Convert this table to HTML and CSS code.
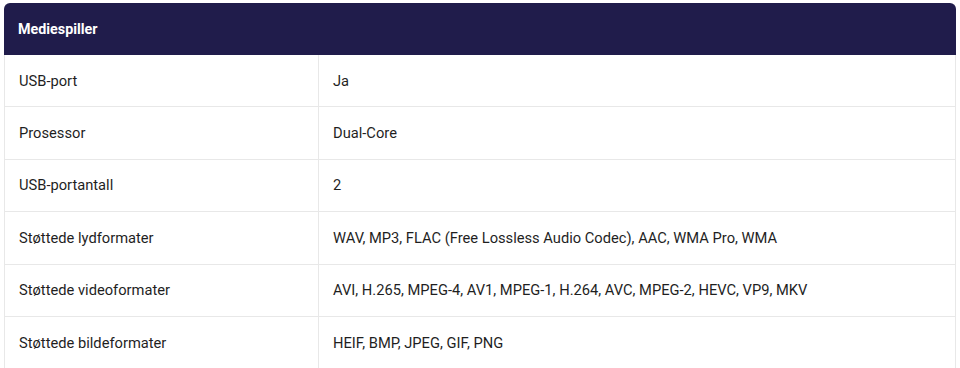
FILE: index.html
```html
<!DOCTYPE html>
<html lang="no">
<head>
<meta charset="utf-8">
<link rel="stylesheet" href="styles.css">
</head>
<body>
<div class="wrap">
  <table class="spec">
    <colgroup>
      <col class="col-k">
      <col class="col-v">
    </colgroup>
    <thead>
      <tr><th colspan="2">Mediespiller</th></tr>
    </thead>
    <tbody>
      <tr><td class="k">USB-port</td><td>Ja</td></tr>
      <tr><td class="k">Prosessor</td><td>Dual-Core</td></tr>
      <tr><td class="k">USB-portantall</td><td>2</td></tr>
      <tr><td class="k">Støttede lydformater</td><td>WAV, MP3, FLAC (Free Lossless Audio Codec), AAC, WMA Pro, WMA</td></tr>
      <tr><td class="k">Støttede videoformater</td><td>AVI, H.265, MPEG-4, AV1, MPEG-1, H.264, AVC, MPEG-2, HEVC, VP9, MKV</td></tr>
      <tr><td class="k">Støttede bildeformater</td><td>HEIF, BMP, JPEG, GIF, PNG</td></tr>
    </tbody>
  </table>
</div>
</body>
</html>
```

FILE: styles.css
```css
html, body {
  margin: 0;
  padding: 0;
  background: #ffffff;
}
body {
  font-family: Roboto, "Liberation Sans", Arial, sans-serif;
  color: #1f1f1f;
  font-size: 14.7px;
}
.wrap {
  padding: 3px 4px 0 4px;
}
.spec {
  width: 100%;
  border-collapse: separate;
  border-spacing: 0;
  table-layout: fixed;
}
.col-k {
  width: 315px;
}
.spec th {
  background: #201c4b;
  color: #ffffff;
  font-weight: 700;
  text-align: left;
  height: 52px;
  padding: 0 14px;
  box-sizing: border-box;
  border-radius: 6px 6px 0 0;
  font-size: 14.3px;
}
.spec td {
  height: 52.4px;
  box-sizing: border-box;
  padding: 0 14px;
  border-bottom: 1px solid #e8e8e8;
  border-right: 1px solid #e8e8e8;
  vertical-align: middle;
}
.spec td.k {
  border-left: 1px solid #e8e8e8;
}
.spec tbody tr:last-child td {
  height: 54px;
}
```
